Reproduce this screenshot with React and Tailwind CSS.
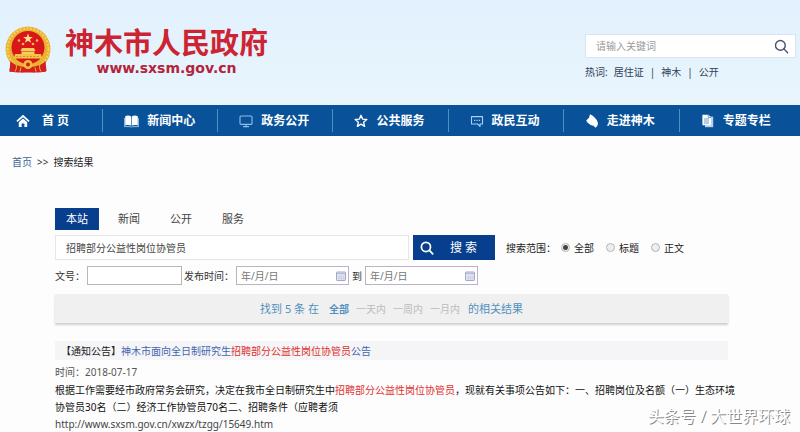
// App.jsx
import React, { useState } from 'react';

const HomeIcon = () => (
  <svg width="14" height="14" viewBox="0 0 14 14" fill="none" stroke="#fff">
    <path d="M1 7.3 7 2l6 5.3" strokeWidth="1.7" />
    <path d="M2.8 8.2 7 4.6l4.2 3.6V13H8.4V9.4H5.6V13H2.8z" fill="#fff" stroke="none" />
  </svg>
);

const BookIcon = () => (
  <svg width="15" height="14" viewBox="0 0 15 14" fill="#fff">
    <path d="M1.2 2.2C3.2 1.2 5.8 1.4 7.2 2.6v9C5.6 10.8 3.2 10.7 1.2 11.4z" />
    <path d="M13.8 2.2C11.8 1.2 9.2 1.4 7.8 2.6v9c1.6-.8 4-.9 6-.2z" />
    <path d="M.4 4v8.6h5.8l1.3.6 1.3-.6h5.8V4" fill="none" stroke="#b9dcf5" strokeWidth=".8" />
  </svg>
);

const ScreenIcon = () => (
  <svg width="14" height="14" viewBox="0 0 14 14" fill="none" stroke="#8fbfe6">
    <rect x="1" y="2" width="12" height="8.4" rx="1" strokeWidth="1.1" />
    <path d="M7 10.4v1.8M4 12.6h6" strokeWidth="1.1" />
  </svg>
);

const StarIcon = () => (
  <svg width="14" height="14" viewBox="0 0 14 14" fill="none" stroke="#fff" strokeWidth="1.4" strokeLinejoin="round">
    <path d="M7 1.3 8.6 5.1l4.2.4-3.2 2.7 1 4.1L7 10.1l-3.6 2.2 1-4.1L1.2 5.5l4.2-.4z" />
  </svg>
);

const ChatIcon = () => (
  <svg width="14" height="14" viewBox="0 0 14 14" fill="none" stroke="#a9d0ee">
    <path d="M1.5 10V2.6h11V10H10v2.4L7.6 10z" strokeWidth="1.1" strokeLinejoin="round" />
    <path d="M4 6.3h1.3M6.4 6.3h1.3M8.8 6.3h1.3" strokeWidth="1.3" />
  </svg>
);

const HorseIcon = () => (
  <svg width="14" height="14" viewBox="0 0 14 14" fill="#fff">
    <path d="M5 .3 7.4 1.400 9.600 3.600 11.800 6l1.200 3.200-.6 2.600-1.800 1.900-2.200-2-2.800-.8L2.400 8.600 1.200 6.400 4 3.800z" />
  </svg>
);

const PagesIcon = () => (
  <svg width="14" height="14" viewBox="0 0 14 14">
    <path d="M4 2.6h8.2v10.6H4z" fill="#b5d3ec" />
    <path d="M1.4.8h6L10 3.2v8H1.4z" fill="#fff" />
    <path d="M7.2.8v2.6H10M3 5h5M3 7h5M3 9h5" fill="none" stroke="#4d86bd" strokeWidth=".8" />
  </svg>
);

const SearchIcon = ({ size, color, width }) => (
  <svg width={size} height={size} viewBox="0 0 16 16" fill="none" stroke={color} strokeWidth={width} strokeLinecap="round">
    <circle cx="6.8" cy="6.8" r="5.2" />
    <path d="m10.8 10.8 3.7 3.9" />
  </svg>
);

const CalendarIcon = () => (
  <svg width="10" height="10" viewBox="0 0 10 10" className="shrink-0">
    <rect x=".5" y="1" width="9" height="8.5" rx=".6" fill="#e6e9f4" stroke="#a3a9c6" />
    <path d="M1 2.5h8" stroke="#b7bdd9" strokeWidth="1.4" />
    <path d="M3.4 4v5M5.6 4v5M7.8 4v5M1.5 5.8h7M1.5 7.6h7" stroke="#c3c8df" strokeWidth=".6" />
  </svg>
);

const Emblem = () => (
  <svg width="48" height="50" viewBox="0 0 48 50" className="shrink-0">
    <path d="M7 31 5.5 47l8-1 5 1.5L24 45l5.5 2.5 5-1.5 7 1-1.5-16z" fill="#d4211d" />
    <circle cx="24" cy="24" r="22.5" fill="#e9b22f" />
    <circle cx="24" cy="24" r="20.5" fill="none" stroke="#f4d162" strokeWidth="2" strokeDasharray="2 1.5" />
    <circle cx="24" cy="22.5" r="16.5" fill="#d9161a" />
    <path d="m24 8.5 1.3 3.4 3.6.1-2.9 2.3 1.1 3.5-3.1-2-3.1 2 1.1-3.5-2.9-2.3 3.6-.1z" fill="#fbe08a" />
    <g fill="#f4b85a">
      <circle cx="15" cy="15.5" r="1.3" />
      <circle cx="19" cy="19" r="1.3" />
      <circle cx="29" cy="19" r="1.3" />
      <circle cx="33" cy="15.5" r="1.3" />
    </g>
    <path d="M18 23h12l1.5 3h-15zM17.5 26.5h13V29h-13z" fill="#f6cf5b" />
    <path d="M11 29h26l1 4.5H10z" fill="#f3c447" />
    <path d="M12 31.5h24" stroke="#c98620" strokeWidth=".8" strokeDasharray="2 1.5" />
    <path d="M6.5 36c4 4 10 6 17.5 6s13.500-2 17.500-6l1 10c-5 2-11 1.500-18.500 1.500S10.500 48 5.500 46z" fill="#d4211d" />
    <circle cx="24" cy="39.5" r="4.5" fill="#efbf3f" />
    <circle cx="24" cy="39.5" r="2" fill="#d9161a" />
    <path d="M12 39.5c1 2 .5 4.5-1 7M36 39.5c-1 2-.5 4.5 1 7M17 42.5l-1 4M31 42.5l1 4" fill="none" stroke="#f0b93f" strokeWidth="1" />
  </svg>
);

const navItems = [
  { name: '首 页', icon: <HomeIcon /> },
  { name: '新闻中心', icon: <BookIcon /> },
  { name: '政务公开', icon: <ScreenIcon /> },
  { name: '公共服务', icon: <StarIcon /> },
  { name: '政民互动', icon: <ChatIcon /> },
  { name: '走进神木', icon: <HorseIcon /> },
  { name: '专题专栏', icon: <PagesIcon /> },
];

const tabs = ['本站', '新闻', '公开', '服务'];
const scopes = ['全部', '标题', '正文'];
const hotWords = ['居住证', '神木', '公开'];
const ranges = ['一天内', '一周内', '一月内'];

const DateInput = ({ label, className }) => (
  <div className={`flex h-[19px] items-center border border-[#b9b3c4] bg-white pr-[2px] pl-1 ${className}`}>
    <input type="text" aria-label={label} placeholder="年/月/日" className="w-full min-w-0 outline-none placeholder:text-[#777]" />
    <CalendarIcon />
  </div>
);

const App = () => {
  const [tab, setTab] = useState('本站');
  const [scope, setScope] = useState('全部');
  const [keyword, setKeyword] = useState('招聘部分公益性岗位协管员');

  return (
    <div className="relative min-h-screen bg-[#fdfdfd] font-['Noto_Sans','Noto_Sans_CJK_SC',sans-serif] text-[10px] leading-4 text-[#333]">
      <header className="flex h-[105px] items-start justify-between bg-linear-to-b from-[#e2f1fd] to-[#e8f5fd] pr-1 pl-1">
        <div className="flex items-center pt-6">
          <Emblem />
          <div className="pt-1 pl-[13px] text-center">
            <h1 className="font-['Liberation_Sans','Noto_Sans_CJK_SC',sans-serif] text-[29px] leading-8 font-bold whitespace-nowrap text-[#cd2433]">神木市人民政府</h1>
            <p className="font-['DejaVu_Sans',sans-serif] text-[14px] leading-4 font-bold text-[#b3243a]">www.sxsm.gov.cn</p>
          </div>
        </div>
        <div className="w-[211px] pt-[34px]">
          <form className="flex h-6 items-center justify-between border border-[#d9e4ee] bg-white pr-[6px] pl-[10px]">
            <input type="text" aria-label="关键词" placeholder="请输入关键词" className="w-full min-w-0 outline-none placeholder:text-[#9a9a9a]" />
            <button type="submit" aria-label="搜索">
              <SearchIcon size={15} color="#44546a" width={1.5} />
            </button>
          </form>
          <div className="flex items-center gap-[6px] pt-[6px] text-[#33415a]">
            <span>热词:</span>
            {hotWords.map((word, index) => (
              <React.Fragment key={word}>
                {index > 0 && <span>|</span>}
                <a href="#">{word}</a>
              </React.Fragment>
            ))}
          </div>
        </div>
      </header>

      <nav className="grid h-[31px] grid-cols-[102fr_115fr_115fr_115fr_115fr_116fr_121fr] items-center bg-[#09529a] text-[12px] font-bold text-white">
        {navItems.map((item, index) => (
          <a
            key={item.name}
            href="#"
            className={`flex h-[23px] items-center whitespace-pre ${index === 0 ? 'gap-3 pl-4' : 'gap-2 border-l border-[#4f8fc6] pl-[21px]'}`}
          >
            {item.icon}
            <span>{item.name}</span>
          </a>
        ))}
      </nav>

      <div className="flex gap-[5px] pt-[18px] pl-3">
        <a href="#" className="text-[#3f6594]">首页</a>
        <span>&gt;&gt;</span>
        <span className="text-[#222]">搜索结果</span>
      </div>

      <main className="mr-[72px] ml-[55px] pt-[38px]">
        <div className="flex gap-2 text-[11px]">
          {tabs.map((name) => (
            <button
              key={name}
              type="button"
              onClick={() => setTab(name)}
              className={`h-[22px] w-11 ${tab === name ? 'bg-[#073f8e] text-white' : 'text-[#444]'}`}
            >
              {name}
            </button>
          ))}
        </div>

        <form onSubmit={(e) => e.preventDefault()}>
          <div className="flex items-center pt-[5px]">
            <input
              type="text"
              aria-label="搜索内容"
              value={keyword}
              onChange={(e) => setKeyword(e.target.value)}
              className="h-[25px] w-[354px] border border-[#e6e6e6] bg-white px-[10px] text-[#444] outline-none"
            />
            <button type="submit" className="ml-1 flex h-[25px] w-[82px] items-center gap-4 bg-[#073f8e] pl-[7px] text-[12px] whitespace-pre text-white">
              <SearchIcon size={14} color="#fff" width={2} />
              搜 索
            </button>
            <fieldset className="flex items-center pl-[11px] whitespace-nowrap text-[#222]">
              <span className="w-[55px]">搜索范围：</span>
              {scopes.map((name) => (
                <label key={name} className="mr-3 flex items-center gap-1">
                  <input
                    type="radio"
                    name="scope"
                    checked={scope === name}
                    onChange={() => setScope(name)}
                    className="size-[9px] appearance-none rounded-full border border-[#b5b5b5] bg-[#eee] checked:bg-[radial-gradient(circle,#444_2px,#eee_3px)]"
                  />
                  {name}
                </label>
              ))}
            </fieldset>
          </div>

          <div className="flex items-center pt-[6px] whitespace-nowrap">
            <label htmlFor="doc-number" className="w-8">文号：</label>
            <input id="doc-number" type="text" className="h-[19px] w-[95px] border border-[#b8b8b8] bg-white px-1 outline-none" />
            <span className="w-[54px] pl-[2px]">发布时间：</span>
            <DateInput label="开始日期" className="w-[113px]" />
            <span className="w-4 text-center">到</span>
            <DateInput label="结束日期" className="w-[113px]" />
          </div>
        </form>

        <div className="mt-[9px] flex h-[29px] items-center justify-center bg-[#f0f0f1] text-[11px] whitespace-pre text-[#5091bd] shadow-[0_2px_2px_#cfcfcf]">
          <span>找到 5 条 在</span>
          <a href="#" className="pl-[10px] text-[10px] font-bold">全部</a>
          {ranges.map((name) => (
            <a key={name} href="#" className="pl-[7px] text-[10px] text-[#bcbcbc]">{name}</a>
          ))}
          <span className="pl-2">的相关结果</span>
        </div>

        <article className="pt-[18px] whitespace-nowrap">
          <h2 className="flex h-[19px] items-center bg-[#f5f5f7] pl-[6px]">
            <span className="text-[#222]">【通知公告】</span>
            <a href="#" className="text-[#3f66ae]">
              神木市面向全日制研究生<em className="text-[#e0302e] not-italic">招聘部分公益性岗位协管员</em>公告
            </a>
          </h2>
          <p className="pt-1 text-[#555]">时间：2018-07-17</p>
          <p className="pt-[2px] leading-[17px] text-[#111]">
            根据工作需要经市政府常务会研究，决定在我市全日制研究生中<em className="text-[#e0302e] not-italic">招聘部分公益性岗位协管员</em>，现就有关事项公告如下：一、招聘岗位及名额（一）生态环境<br />
            协管员30名（二）经济工作协管员70名二、招聘条件（应聘者须
          </p>
          <a href="#" className="block text-[#444]">http://www.sxsm.gov.cn/xwzx/tzgg/15649.htm</a>
        </article>
      </main>

      <div className="absolute right-[10px] bottom-1 text-[16px] leading-6 whitespace-pre text-white [text-shadow:1px_1px_0_#888]">
        头条号 / 大世界环球
      </div>
    </div>
  );
};

export default App;
